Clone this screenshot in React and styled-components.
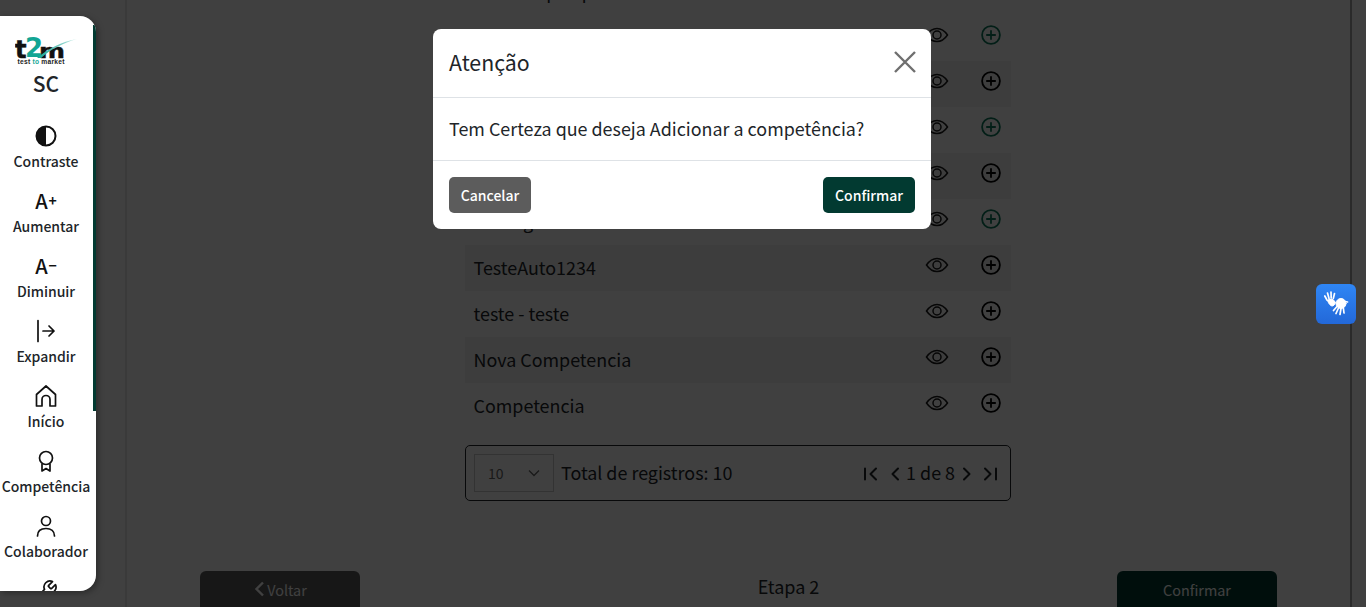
import React from 'react';
import styled, { createGlobalStyle } from 'styled-components';

const FONT = '"Noto Sans CJK JP", "Noto Sans", sans-serif';

const GlobalStyle = createGlobalStyle`
    html, body {
        margin: 0;
        padding: 0;
        height: 100%;
        overflow: hidden;
        background: #ffffff;
        font-family: ${FONT};
    }
    * { box-sizing: border-box; }
`;

const Page = styled.div`
    height: 607px;
    width: 1366px;
    position: relative;
    overflow: hidden;
    display: flex;
    background: #ffffff;
`;
const Gutter = styled.div`
    width: 125px;
    flex: none;
`;
const Main = styled.main`
    width: 1227px;
    flex: none;
    height: 607px;
    border-left: 2px solid #e6e6e6;
    border-right: 2px solid #a8a8a8;
    display: flex;
    flex-direction: column;
    align-items: center;
    position: relative;
`;
const ListColumn = styled.div`
    width: 546px;
    margin-top: -31px;
    margin-right: 1px;
    display: flex;
    flex-direction: column;
`;
const Row = styled.div`
    height: 46px;
    flex: none;
    display: flex;
    align-items: center;
    padding-left: 8.5px;
    background: ${p => (p.$striped ? '#f2f2f2' : 'transparent')};
    font-size: 17.9px;
    color: #212529;
`;
const RowLabel = styled.span`
    flex: 1;
    padding-bottom: 3px;
`;
const RowActions = styled.div`
    display: flex;
    align-items: center;
    width: 86px;
    gap: 32px;
    padding-bottom: 6px;
`;
const Pager = styled.div`
    height: 56px;
    margin-top: 16px;
    border: 1px solid #212529;
    border-radius: 5px;
    display: flex;
    align-items: center;
    padding: 0 11px 0 8px;
    font-size: 17.9px;
    color: #212529;
`;
const PageSize = styled.div`
    width: 80px;
    height: 38px;
    border: 1px solid #cccccc;
    display: flex;
    align-items: center;
    justify-content: space-between;
    padding: 0 12px 0 13px;
    font-size: 14px;
    color: #666666;
    margin-right: 7px;
`;
const Total = styled.span`
    flex: 1;
    padding-bottom: 2px;
`;
const PagerNav = styled.div`
    display: flex;
    align-items: center;
    gap: 3px;
`;
const PagerCount = styled.span`
    margin-left: -1px;
    padding-bottom: 2px;
`;
const PagerIcon = styled.svg`
    width: 18px;
    height: 18px;
    margin: 2px ${p => (p.$side === 'first' ? '3px' : '0')} 0 ${p => (p.$side === 'last' ? '2px' : '0')};
    fill: none;
    stroke: #212529;
    stroke-width: 2;
    stroke-linecap: round;
    stroke-linejoin: round;
`;
const Footer = styled.div`
    position: absolute;
    left: 73px;
    right: 73px;
    top: 571px;
    display: flex;
    align-items: flex-start;
    justify-content: space-between;
`;
const StepButton = styled.button`
    width: 160px;
    height: 44px;
    border: 0;
    border-radius: 6px;
    background: ${p => p.$bg};
    color: #ffffff;
    font-family: ${FONT};
    font-size: 14.4px;
    display: flex;
    align-items: center;
    justify-content: center;
    gap: 2px;
    padding: 0 0 8px;
`;
const StepLabel = styled.span`
    font-size: 18px;
    color: #212529;
    margin-top: 2px;
    margin-left: 100px;
`;
const Backdrop = styled.div`
    position: absolute;
    inset: 0;
    background: rgba(0, 0, 0, 0.75);
`;
const Sidebar = styled.nav`
    position: absolute;
    left: 0;
    top: 16px;
    width: 96px;
    height: 575px;
    background: #ffffff;
    border-radius: 0 16px 16px 0;
    box-shadow: 2px 2px 6px rgba(0, 0, 0, 0.35);
    overflow: hidden;
    display: flex;
    flex-direction: column;
    align-items: center;
    padding: 19px 4px 0 0;
`;
const ScrollThumb = styled.div`
    position: absolute;
    right: 0;
    top: 9px;
    width: 3px;
    height: 386px;
    background: #023a31;
`;
const LogoWrap = styled.div`
    width: 64px;
    height: 32px;
    margin: 0 -2px 0 0;
    flex: none;
`;
const SiglaText = styled.div`
    font-size: 21px;
    font-weight: 500;
    line-height: 32px;
    color: #212529;
    margin-bottom: 25px;
`;
const SideItem = styled.div`
    height: 65px;
    flex: none;
    width: 100%;
    display: flex;
    flex-direction: column;
    align-items: center;
    font-size: 14px;
    line-height: 20px;
    font-weight: 500;
    color: #212529;
    white-space: nowrap;
`;
const SideIconBox = styled.div`
    height: 24px;
    margin-bottom: 3px;
    display: flex;
    align-items: center;
    justify-content: center;
    font-size: 20px;
    line-height: 24px;
    color: #111111;
`;
const SizeSign = styled.span`
    font-size: 14px;
    font-weight: 700;
    margin-left: 1px;
    margin-bottom: 3px;
`;
const Modal = styled.div`
    position: absolute;
    left: 433px;
    top: 29px;
    width: 498px;
    height: 200px;
    background: #ffffff;
    border-radius: 8px;
    display: flex;
    flex-direction: column;
`;
const ModalHeader = styled.div`
    height: 69px;
    flex: none;
    border-bottom: 1px solid #dee2e6;
    display: flex;
    align-items: center;
    justify-content: space-between;
    padding: 0 13px 3px 16px;
    font-size: 21.3px;
    color: #212529;
`;
const ModalBody = styled.div`
    height: 63px;
    flex: none;
    border-bottom: 1px solid #dee2e6;
    display: flex;
    align-items: center;
    padding: 0 16px 3px;
    font-size: 17.9px;
    color: #212529;
`;
const ModalFooter = styled.div`
    flex: 1;
    display: flex;
    align-items: center;
    justify-content: space-between;
    padding: 0 16px;
`;
const ModalButton = styled.button`
    height: 36px;
    width: ${p => p.$w}px;
    border: 0;
    border-radius: 5px;
    background: ${p => p.$bg};
    color: #ffffff;
    font-family: ${FONT};
    font-size: 14px;
    font-weight: 500;
    padding: 0 0 1px;
`;
const LibrasButton = styled.div`
    position: absolute;
    left: 1316px;
    top: 284px;
    width: 40px;
    height: 40px;
    border-radius: 6px;
    background: linear-gradient(#2f86f5, #2368d8);
    display: flex;
    align-items: center;
    justify-content: center;
`;

const Eye = () => (
    <svg width="24" height="24" viewBox="0 0 24 24" fill="none" stroke="#1a1a1a" strokeWidth="1.5">
        <path d="M1.500 12C4.500 7.600 8 5.500 12 5.500s7.500 2.100 10.500 6.500C19.500 16.400 16 18.500 12 18.500S4.500 16.400 1.500 12z" />
        <circle cx="12" cy="12" r="4" />
    </svg>
);

const Plus = ({ green }) => (
    <svg width="20" height="20" viewBox="0 0 20 20" fill="none" stroke={green ? '#0f7a5c' : '#000000'} strokeWidth="1.8">
        <circle cx="10" cy="10" r="8.900" />
        <path d="M10 5.200v9.600M5.200 10h9.600" />
    </svg>
);

const rows = [
    { label: 'Teste de pesquisa' },
    { label: '', green: true },
    { label: '', striped: true },
    { label: '', green: true },
    { label: '', striped: true },
    { label: 'Contagem', green: true },
    { label: 'TesteAuto1234', striped: true },
    { label: 'teste - teste' },
    { label: 'Nova Competencia', striped: true },
    { label: 'Competencia' },
];

const Logo = () => (
    <svg viewBox="0 0 64 32" width="64" height="32">
        <defs>
            <linearGradient id="swoosh" x1="0" x2="1">
                <stop offset="0" stopColor="#0fa594" />
                <stop offset="1" stopColor="#c8ece6" />
            </linearGradient>
        </defs>
        <text x="0" y="23" fontFamily="DejaVu Sans, sans-serif" fontSize="24" fontWeight="700" fill="#111" stroke="#111" strokeWidth="0.6">t</text>
        <text x="24" y="23" fontFamily="DejaVu Sans, sans-serif" fontSize="19" fontWeight="700" fill="#111" stroke="#111" strokeWidth="0.4" textLength="26" lengthAdjust="spacingAndGlyphs">m</text>
        <text x="10" y="22" fontFamily="DejaVu Sans, sans-serif" fontSize="26" fontWeight="700" fill="#12a594">2</text>
        <path d="M22 23 C34 13 46 7 62 4 C48 8 36 14 26 23z" fill="url(#swoosh)" />
        <text x="2.500" y="29" fontFamily="Liberation Sans, sans-serif" fontSize="6.700" fontWeight="700" fill="#222" textLength="47">
            test <tspan fill="#1aa898">to</tspan> market
        </text>
    </svg>
);

const Stroke = ({ children }) => (
    <svg width="24" height="24" viewBox="0 0 24 24" fill="none" stroke="#111" strokeWidth="1.700" strokeLinecap="round" strokeLinejoin="round">
        {children}
    </svg>
);

const App = () => (
    <Page>
        <GlobalStyle />
        <Gutter />
        <Main>
            <ListColumn>
                {rows.map((r, i) => (
                    <Row key={i} $striped={r.striped}>
                        <RowLabel>{r.label}</RowLabel>
                        <RowActions>
                            <Eye />
                            <Plus green={r.green} />
                        </RowActions>
                    </Row>
                ))}
                <Pager>
                    <PageSize>
                        10
                        <svg width="14" height="14" viewBox="0 0 14 14" fill="none" stroke="#666" strokeWidth="1.300">
                            <path d="M2 4.500l5 5 5-5" />
                        </svg>
                    </PageSize>
                    <Total>Total de registros: 10</Total>
                    <PagerNav>
                        <PagerIcon $side="first" viewBox="0 0 18 18"><path d="M3 3.500v11M14 3.500L8.500 9l5.500 5.500" /></PagerIcon>
                        <PagerIcon viewBox="0 0 18 18"><path d="M12 3.500L6.500 9l5.500 5.500" /></PagerIcon>
                        <PagerCount>1 de 8</PagerCount>
                        <PagerIcon viewBox="0 0 18 18"><path d="M6 3.500L11.500 9 6 14.500" /></PagerIcon>
                        <PagerIcon $side="last" viewBox="0 0 18 18"><path d="M15 3.500v11M4 3.500L9.500 9 4 14.500" /></PagerIcon>
                    </PagerNav>
                </Pager>
            </ListColumn>
            <Footer>
                <StepButton $bg="#5b5b5b">
                    <svg width="12" height="16" viewBox="0 0 12 16" fill="none" stroke="#ffffff" strokeWidth="2.400">
                        <path d="M10 1.500L3.500 8l6.500 6.500" />
                    </svg>
                    Voltar
                </StepButton>
                <StepLabel>Etapa 2</StepLabel>
                <StepButton $bg="#023a31">Confirmar</StepButton>
            </Footer>
        </Main>
        <Backdrop />
        <Sidebar>
            <ScrollThumb />
            <LogoWrap><Logo /></LogoWrap>
            <SiglaText>SC</SiglaText>
            <SideItem>
                <SideIconBox>
                    <svg width="22" height="22" viewBox="0 0 22 22">
                        <circle cx="11" cy="11" r="9.500" fill="#fff" stroke="#111" strokeWidth="2" />
                        <path d="M11 1.500a9.500 9.500 0 0 0 0 19z" fill="#111" />
                    </svg>
                </SideIconBox>
                Contraste
            </SideItem>
            <SideItem><SideIconBox>A<SizeSign>+</SizeSign></SideIconBox>Aumentar</SideItem>
            <SideItem><SideIconBox>A<SizeSign>−</SizeSign></SideIconBox>Diminuir</SideItem>
            <SideItem>
                <SideIconBox>
                    <Stroke><path d="M4 1.500v21M9 12h11M15 7l5 5-5 5" /></Stroke>
                </SideIconBox>
                Expandir
            </SideItem>
            <SideItem>
                <SideIconBox>
                    <Stroke><path d="M2.500 10.500L12 2l9.500 8.500V22H16v-6.500a4 4 0 0 0-8 0V22H2.500z" /></Stroke>
                </SideIconBox>
                Início
            </SideItem>
            <SideItem>
                <SideIconBox>
                    <Stroke>
                        <circle cx="12" cy="9" r="6.500" />
                        <path d="M8 15v7l4-2.500 4 2.500v-7" />
                    </Stroke>
                </SideIconBox>
                Competência
            </SideItem>
            <SideItem>
                <SideIconBox>
                    <Stroke>
                        <circle cx="12" cy="7" r="4.500" />
                        <path d="M3.500 22c0-5 3.500-7.500 8.500-7.500s8.500 2.500 8.500 7.500" />
                    </Stroke>
                </SideIconBox>
                Colaborador
            </SideItem>
            <SideItem>
                <SideIconBox>
                    <Stroke>
                        <path d="M14.700 6.300a1 1 0 0 0 0 1.400l1.600 1.600a1 1 0 0 0 1.400 0l3.770-3.770a6 6 0 0 1-7.940 7.940l-6.910 6.910a2.120 2.120 0 0 1-3-3l6.910-6.910a6 6 0 0 1 7.940-7.940l-3.760 3.760z" />
                    </Stroke>
                </SideIconBox>
            </SideItem>
        </Sidebar>
        <Modal>
            <ModalHeader>
                Atenção
                <svg width="26" height="26" viewBox="0 0 26 26" stroke="#6f6f6f" strokeWidth="2.400">
                    <path d="M3 3l20 20M23 3L3 23" />
                </svg>
            </ModalHeader>
            <ModalBody>Tem Certeza que deseja Adicionar a competência?</ModalBody>
            <ModalFooter>
                <ModalButton $w={82} $bg="#5c5c5c">Cancelar</ModalButton>
                <ModalButton $w={92} $bg="#023a31">Confirmar</ModalButton>
            </ModalFooter>
        </Modal>
        <LibrasButton>
            <svg width="26" height="26" viewBox="0 0 26 26" fill="none" stroke="#ffffff" strokeLinecap="round">
                <path strokeWidth="1.700" d="M4 9L1.800 5M6 7.500L4.500 2M8.200 7L8 1M10.300 7.500L11.500 2.500" />
                <path strokeWidth="1" d="M4.500 9.500c1-1.500 4-2 6-.5l2 2.500c-1 2.500-2 3.500-3.500 3.500s-3.500-2.500-4.500-5.500z" fill="#ffffff" />
                <circle cx="18" cy="12.500" r="5" fill="#ffffff" />
                <path strokeWidth="1.700" d="M14 15.500L10.500 19.500M15.500 17L13 22.500M18 17.500L17 23.500M20.300 16.500L21 22M22 10.500l2.500 .5" />
            </svg>
        </LibrasButton>
    </Page>
);

export default App;
